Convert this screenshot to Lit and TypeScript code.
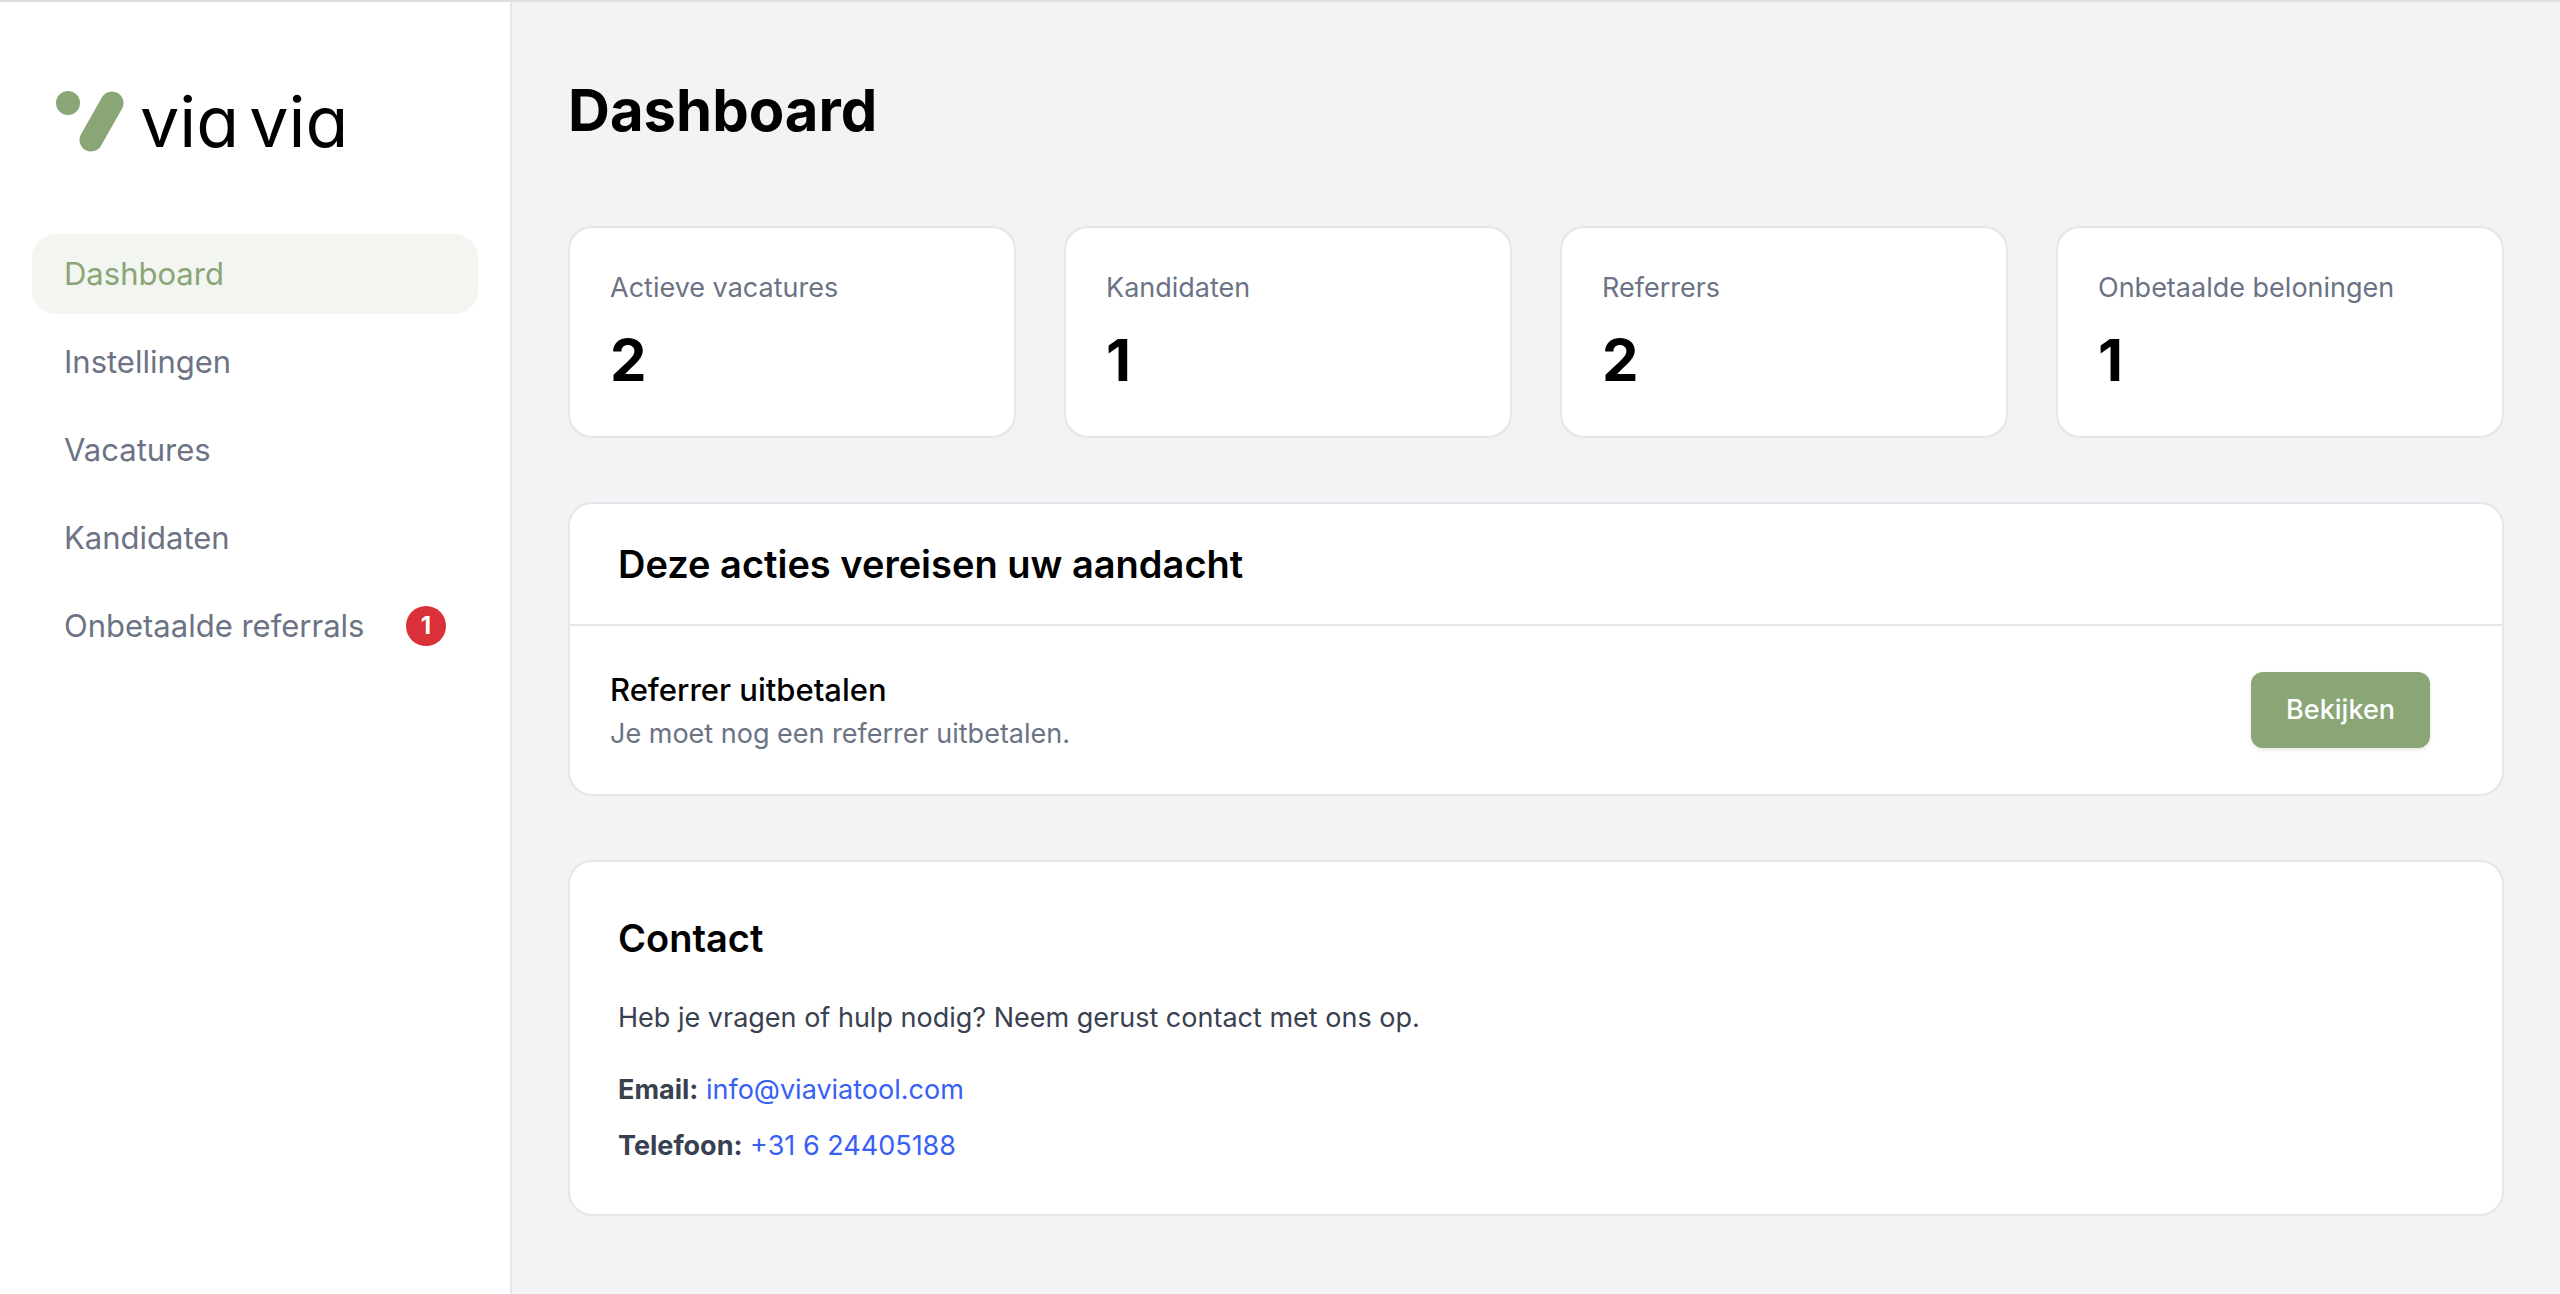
import { LitElement, html, css, svg } from "lit";
import { customElement, property } from "lit/decorators.js";

interface NavItem {
  label: string;
  active?: boolean;
  count?: number;
}

const NAV: NavItem[] = [
  { label: "Dashboard", active: true },
  { label: "Instellingen" },
  { label: "Vacatures" },
  { label: "Kandidaten" },
  { label: "Onbetaalde referrals", count: 1 },
];

const STATS = [
  { label: "Actieve vacatures", value: 2 },
  { label: "Kandidaten", value: 1 },
  { label: "Referrers", value: 2 },
  { label: "Onbetaalde beloningen", value: 1 },
];

const mark = svg`
  <circle cx="12" cy="12" r="12" />
  <line x1="56" y1="12" x2="35" y2="49" stroke-width="23" stroke-linecap="round" />
`;

@customElement("via-sidebar")
export class ViaSidebar extends LitElement {
  static styles = css`
    :host {
      display: flex;
      flex-direction: column;
      box-sizing: border-box;
      width: 512px;
      flex: none;
      padding: 80px 32px 32px;
      background: #ffffff;
      border-right: 2px solid #e5e5ea;
    }
    .brand {
      display: flex;
      align-items: center;
      gap: 16px;
      height: 80px;
      margin-bottom: 72px;
      padding-left: 24px;
      color: #000000;
      text-decoration: none;
    }
    .mark {
      flex: none;
      fill: #8aa576;
      stroke: none;
    }
    .mark line {
      stroke: #8aa576;
    }
    .word {
      display: flex;
      gap: 10px;
      font-size: 70px;
      font-weight: 400;
      line-height: 76px;
      font-feature-settings: "cv11";
      white-space: nowrap;
    }
    .list {
      display: flex;
      flex-direction: column;
      gap: 8px;
      margin: 0;
      padding: 0;
      list-style: none;
    }
    .link {
      display: flex;
      align-items: center;
      justify-content: space-between;
      height: 80px;
      padding: 0 32px;
      border-radius: 24px;
      color: #6b7385;
      font-size: 31px;
      line-height: 48px;
      text-decoration: none;
      white-space: nowrap;
    }
    .link.active {
      background: #f3f5f1;
      color: #8aa576;
    }
    .badge {
      display: flex;
      align-items: center;
      justify-content: center;
      width: 40px;
      height: 40px;
      border-radius: 50%;
      background: #d9303a;
      color: #ffffff;
      font-size: 24px;
      font-weight: 700;
      line-height: 40px;
    }
  `;

  render() {
    return html`
      <a class="brand" href="#">
        <svg class="mark" width="68" height="62" viewBox="0 0 68 62" aria-hidden="true">${mark}</svg>
        <span class="word"><span>via</span> <span>via</span></span>
      </a>
      <nav>
        <ul class="list">
          ${NAV.map(
            (item) => html`
              <li>
                <a class="link ${item.active ? "active" : ""}" href="#">
                  <span>${item.label}</span>
                  ${item.count ? html`<span class="badge">${item.count}</span>` : null}
                </a>
              </li>
            `
          )}
        </ul>
      </nav>
    `;
  }
}

@customElement("stat-card")
export class StatCard extends LitElement {
  @property() label = "";
  @property({ type: Number }) value = 0;

  static styles = css`
    :host {
      display: block;
      padding: 40px;
      background: #ffffff;
      border: 2px solid #e5e5ea;
      border-radius: 24px;
    }
    .label {
      margin: 0;
      color: #6b7385;
      font-size: 27px;
      line-height: 40px;
    }
    .value {
      margin: 16px 0 0;
      color: #000000;
      font-size: 58px;
      font-weight: 700;
      line-height: 72px;
    }
  `;

  render() {
    return html`
      <p class="label">${this.label}</p>
      <p class="value">${this.value}</p>
    `;
  }
}

@customElement("app-root")
export class AppRoot extends LitElement {
  static styles = css`
    :host {
      display: flex;
      box-sizing: border-box;
      min-height: 100vh;
      border-top: 2px solid #dedede;
      background: #f3f3f6;
      color: #000000;
      font-family: Inter, "Liberation Sans", sans-serif;
    }
    .main {
      flex: 1;
      min-width: 0;
      padding: 72px 56px;
    }
    .title {
      margin: 0 0 80px;
      font-size: 58px;
      font-weight: 700;
      line-height: 72px;
    }
    .stats {
      display: grid;
      grid-template-columns: repeat(4, minmax(0, 1fr));
      gap: 48px;
    }
    .panel {
      margin-top: 64px;
      background: #ffffff;
      border: 2px solid #e5e5ea;
      border-radius: 24px;
    }
    .heading {
      margin: 0;
      font-size: 38px;
      font-weight: 600;
      line-height: 56px;
    }
    .panel-head {
      padding: 32px 48px;
      border-bottom: 2px solid #e5e5ea;
    }
    .action {
      display: flex;
      align-items: center;
      justify-content: space-between;
      padding: 40px 72px 40px 40px;
    }
    .action-title {
      margin: 0;
      font-size: 31px;
      font-weight: 500;
      line-height: 48px;
    }
    .action-text {
      margin: 0;
      color: #6b7385;
      font-size: 27px;
      line-height: 40px;
    }
    .button {
      height: 76px;
      padding: 0 35px;
      border: 0;
      border-radius: 12px;
      background: #8aa576;
      box-shadow: 0 2px 4px rgba(0, 0, 0, 0.1);
      color: #ffffff;
      font-family: inherit;
      font-size: 27px;
      font-weight: 500;
      line-height: 40px;
    }
    .contact {
      padding: 48px;
      color: #394150;
      font-size: 27px;
      line-height: 40px;
    }
    .contact .heading {
      color: #000000;
    }
    .contact p {
      margin: 0;
    }
    .contact .intro {
      margin: 32px 0;
    }
    .contact .line + .line {
      margin-top: 16px;
    }
    .contact a {
      color: #3860f6;
      text-decoration: none;
    }
    .contact strong {
      font-weight: 700;
    }
  `;

  render() {
    return html`
      <via-sidebar></via-sidebar>
      <main class="main">
        <h1 class="title">Dashboard</h1>
        <div class="stats">
          ${STATS.map((s) => html`<stat-card .label=${s.label} .value=${s.value}></stat-card>`)}
        </div>
        <section class="panel">
          <div class="panel-head">
            <h2 class="heading">Deze acties vereisen uw aandacht</h2>
          </div>
          <div class="action">
            <div>
              <h3 class="action-title">Referrer uitbetalen</h3>
              <p class="action-text">Je moet nog een referrer uitbetalen.</p>
            </div>
            <button class="button" type="button">Bekijken</button>
          </div>
        </section>
        <section class="panel contact">
          <h2 class="heading">Contact</h2>
          <p class="intro">Heb je vragen of hulp nodig? Neem gerust contact met ons op.</p>
          <p class="line"><strong>Email:</strong> <a href="mailto:info@viaviatool.com">info@viaviatool.com</a></p>
          <p class="line"><strong>Telefoon:</strong> <a href="tel:+31624405188">+31 6 24405188</a></p>
        </section>
      </main>
    `;
  }
}
